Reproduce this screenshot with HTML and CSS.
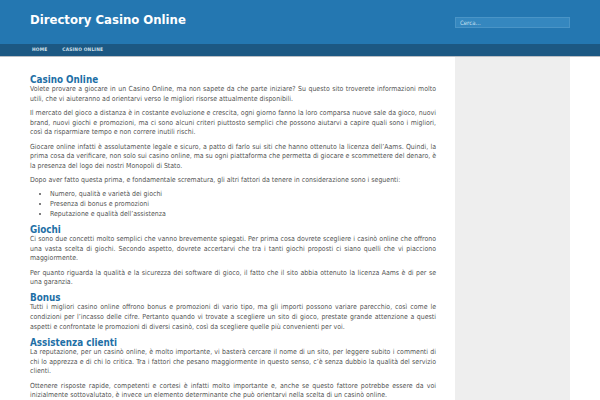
FILE: index.html
```html
<!DOCTYPE html>
<html lang="it">
<head>
<meta charset="utf-8">
<title>Directory Casino Online</title>
<link rel="stylesheet" href="styles.css">
</head>
<body>
<header class="header">
  <div class="header-inner">
    <h1 class="site-title">Directory Casino Online</h1>
    <input class="search" type="text" placeholder="Cerca...">
  </div>
</header>
<nav class="nav">
  <a href="#">HOME</a>
  <a href="#">CASINO ONLINE</a>
</nav>
<div class="wrap">
  <main class="content">
    <h2>Casino Online</h2>
    <p>Volete provare a giocare in un Casino Online, ma non sapete da che parte iniziare? Su questo sito troverete informazioni molto utili, che vi aiuteranno ad orientarvi verso le migliori risorse attualmente disponibili.</p>
    <p>Il mercato del gioco a distanza è in costante evoluzione e crescita, ogni giorno fanno la loro comparsa nuove sale da gioco, nuovi brand, nuovi giochi e promozioni, ma ci sono alcuni criteri piuttosto semplici che possono aiutarvi a capire quali sono i migliori, così da risparmiare tempo e non correre inutili rischi.</p>
    <p>Giocare online infatti è assolutamente legale e sicuro, a patto di farlo sui siti che hanno ottenuto la licenza dell’Aams. Quindi, la prima cosa da verificare, non solo sui casino online, ma su ogni piattaforma che permetta di giocare e scommettere del denaro, è la presenza del logo dei nostri Monopoli di Stato.</p>
    <p>Dopo aver fatto questa prima, e fondamentale scrematura, gli altri fattori da tenere in considerazione sono i seguenti:</p>
    <ul>
      <li>Numero, qualità e varietà dei giochi</li>
      <li>Presenza di bonus e promozioni</li>
      <li>Reputazione e qualità dell’assistenza</li>
    </ul>
    <h2>Giochi</h2>
    <p>Ci sono due concetti molto semplici che vanno brevemente spiegati. Per prima cosa dovrete scegliere i casinò online che offrono una vasta scelta di giochi. Secondo aspetto, dovrete accertarvi che tra i tanti giochi proposti ci siano quelli che vi piacciono maggiormente.</p>
    <p>Per quanto riguarda la qualità e la sicurezza dei software di gioco, il fatto che il sito abbia ottenuto la licenza Aams è di per se una garanzia.</p>
    <h2>Bonus</h2>
    <p>Tutti i migliori casino online offrono bonus e promozioni di vario tipo, ma gli importi possono variare parecchio, così come le condizioni per l’incasso delle cifre. Pertanto quando vi trovate a scegliere un sito di gioco, prestate grande attenzione a questi aspetti e confrontate le promozioni di diversi casinò, così da scegliere quelle più convenienti per voi.</p>
    <h2>Assistenza clienti</h2>
    <p>La reputazione, per un casinò online, è molto importante, vi basterà cercare il nome di un sito, per leggere subito i commenti di chi lo apprezza e di chi lo critica. Tra i fattori che pesano maggiormente in questo senso, c’è senza dubbio la qualità del servizio clienti.</p>
    <p>Ottenere risposte rapide, competenti e cortesi è infatti molto importante e, anche se questo fattore potrebbe essere da voi inizialmente sottovalutato, è invece un elemento determinante che può orientarvi nella scelta di un casinò online.</p>
  </main>
  <aside class="sidebar"></aside>
</div>
</body>
</html>
```
FILE: styles.css
```css
* { box-sizing: border-box; }
html, body { margin: 0; padding: 0; }
body {
  background: #fff;
  font-family: "DejaVu Sans Condensed", "DejaVu Sans", sans-serif;
  color: #555;
  overflow: hidden;
}
.header {
  background: #2477b1;
  height: 44px;
}
.header-inner {
  display: flex;
  justify-content: space-between;
  align-items: flex-start;
  padding: 0 30px;
}
.site-title {
  margin: 12px 0 0;
  font-size: 13px;
  font-weight: bold;
  color: #fff;
  line-height: 16px;
}
.search {
  margin-top: 17px;
  width: 115px;
  height: 11px;
  background: #3587bf;
  border: 1px solid #4a94c6;
  color: #d6e8f5;
  font-family: inherit;
  font-size: 6px;
  padding: 0 4px;
  outline: none;
}
.search::placeholder { color: #c8e0f1; }
.nav {
  background: #1c5883;
  height: 12px;
  border-bottom: 1px solid #b9bec4;
  display: flex;
  gap: 15px;
  padding-left: 32px;
  box-sizing: content-box;
}
.nav a {
  color: #d5e2ec;
  text-decoration: none;
  font-size: 4.8px;
  font-weight: bold;
  line-height: 12px;
  letter-spacing: 0.2px;
}
.wrap {
  display: flex;
  gap: 19px;
  padding: 0 30px;
}
.content {
  width: 406px;
  padding-top: 17px;
  font-size: 6.95px;
  line-height: 9.7px;
  text-align: justify;
}
.sidebar {
  width: 115px;
  background: #eeeeee;
  height: 400px;
}
.content h2 {
  color: #1e6fa6;
  font-size: 9.8px;
  font-weight: bold;
  line-height: 11px;
  margin: 1px 0 0;
}
.content h2:first-child { margin-top: 0; }
.content p { margin: 0 0 4.5px; }
.content ul {
  margin: 0 0 4.5px;
  padding-left: 20px;
}
.content li { line-height: 9.7px; }
```
